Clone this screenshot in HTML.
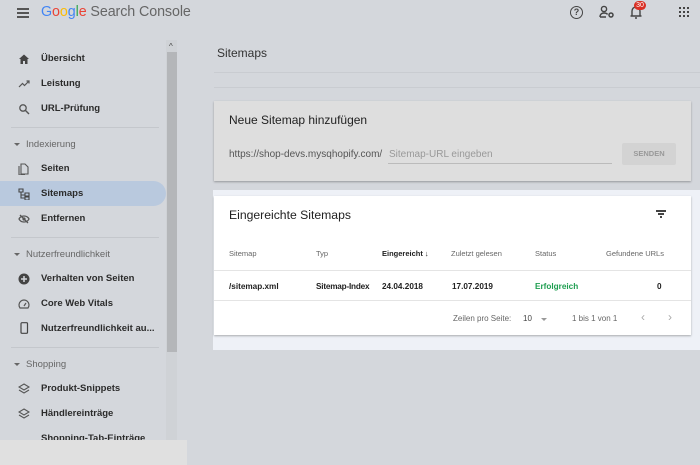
<!DOCTYPE html>
<html><head><meta charset="utf-8"><style>
*{box-sizing:border-box;margin:0;padding:0}
body{width:700px;height:465px;overflow:hidden;background:#d4d7dc;font-family:"Liberation Sans",Arial,sans-serif;position:relative;color:#222}
.abs{position:absolute}
.nav{font-size:9.5px;font-weight:bold;color:#2b2b2b;position:absolute;left:41px}
.ic{position:absolute;left:18px;width:12px;height:12px}
.sec{font-size:9.5px;color:#666;position:absolute;left:26px}
.tri{position:absolute;left:14px;width:0;height:0;border-left:3px solid transparent;border-right:3px solid transparent;border-top:3px solid #666}
.hr{position:absolute;left:11px;width:148px;height:1px;background:#c4c7cc}
.th{position:absolute;top:249px;font-size:7.5px;color:#666}
.td{position:absolute;top:282px;font-size:8.2px;font-weight:bold;color:#222}
</style></head><body>
<div class="abs" style="left:17px;top:8px;width:12px;height:2px;background:#555;box-shadow:0 4px 0 #555,0 8px 0 #555"></div>
<div class="abs" style="left:41px;top:4px;font-size:14.3px;letter-spacing:-0.1px"><span style="color:#4285f4">G</span><span style="color:#ea4335">o</span><span style="color:#fbbc05">o</span><span style="color:#4285f4">g</span><span style="color:#34a853">l</span><span style="color:#ea4335">e</span> <span style="color:#666">Search Console</span></div>
<div class="abs" style="left:570px;top:6px;width:13px;height:13px;border:1.5px solid #444;border-radius:50%;font-size:9px;font-weight:bold;text-align:center;line-height:10px;color:#444">?</div>
<svg class="abs" style="left:599px;top:5px" width="16" height="14"><circle cx="5" cy="4" r="2.6" fill="none" stroke="#444" stroke-width="1.4"/><path d="M1 12c0-3 2-4 4-4s3 .5 3.5 1.5M1 12h6" fill="none" stroke="#444" stroke-width="1.4"/><circle cx="12" cy="10" r="2" fill="none" stroke="#444" stroke-width="1.5"/></svg>
<svg class="abs" style="left:630px;top:5px" width="12" height="15"><path d="M2 11V6a4 4 0 018 0v5h1.5H.5M5 13h2" fill="none" stroke="#444" stroke-width="1.4"/></svg>
<div class="abs" style="left:634px;top:1px;width:12px;height:9px;background:#d93025;border-radius:5px;color:#fff;font-size:7px;text-align:center;line-height:9px">30</div>
<div class="abs" style="left:679px;top:7px;width:2px;height:2px;background:#444;box-shadow:4px 0 #444,8px 0 #444,0 4px #444,4px 4px #444,8px 4px #444,0 8px #444,4px 8px #444,8px 8px #444"></div>
<div class="abs" style="left:166px;top:40px;width:11px;height:400px;background:#cfd2d6"></div>
<div class="abs" style="left:167px;top:52px;width:10px;height:300px;background:#b4b6b9"></div>
<div class="abs" style="left:169px;top:42px;font-size:8px;color:#444">^</div>
<div class="abs" style="left:0;top:181px;width:166px;height:25px;background:#b9c9de;border-radius:0 13px 13px 0"></div>
<svg class="ic" style="top:53px" viewBox="0 0 12 12"><path d="M1 6L6 1.5 11 6H9.5v5H7V8H5v3H2.5V6z" fill="#444"/></svg>
<div class="nav" style="top:53px">Übersicht</div>
<svg class="ic" style="top:78px" viewBox="0 0 12 12"><path d="M1 9l3.5-3.5 2 2L11 3M8.5 3H11v2.5" fill="none" stroke="#555" stroke-width="1.2"/></svg>
<div class="nav" style="top:78px">Leistung</div>
<svg class="ic" style="top:103px" viewBox="0 0 12 12"><circle cx="5" cy="5" r="3.2" fill="none" stroke="#555" stroke-width="1.3"/><path d="M7.5 7.5L11 11" stroke="#555" stroke-width="1.4"/></svg>
<div class="nav" style="top:103px">URL-Prüfung</div>
<div class="hr" style="top:127px"></div>
<div class="tri" style="top:143px"></div><div class="sec" style="top:139px">Indexierung</div>
<svg class="ic" style="top:163px" viewBox="0 0 12 12"><path d="M3 1h4l3 3v7H3zM1 3v9h6" fill="none" stroke="#555" stroke-width="1.1"/></svg>
<div class="nav" style="top:163px">Seiten</div>
<svg class="ic" style="top:188px" viewBox="0 0 12 12"><path d="M1 1h4v3H1zM3 4v6h4M3 7h4M7 5h4v3H7zM7 9h4v3H7z" fill="none" stroke="#444" stroke-width="1.1"/></svg>
<div class="nav" style="top:188px">Sitemaps</div>
<svg class="ic" style="top:213px" viewBox="0 0 12 12"><path d="M1 6c2-4 8-4 10 0-2 4-8 4-10 0zM2 2l8 8" fill="none" stroke="#555" stroke-width="1.3"/><circle cx="6" cy="6" r="1.6" fill="#555"/></svg>
<div class="nav" style="top:213px">Entfernen</div>
<div class="hr" style="top:237px"></div>
<div class="tri" style="top:253px"></div><div class="sec" style="top:249px">Nutzerfreundlichkeit</div>
<svg class="ic" style="top:273px" viewBox="0 0 12 12"><circle cx="6" cy="6" r="5.5" fill="#444"/><path d="M3 6h6M6 3v6" stroke="#d4d7dc" stroke-width="1.5"/></svg>
<div class="nav" style="top:273px">Verhalten von Seiten</div>
<svg class="ic" style="top:298px" viewBox="0 0 12 12"><path d="M2 10a5 5 0 118 0z" fill="none" stroke="#555" stroke-width="1.2"/><path d="M6 8l2-3" stroke="#555" stroke-width="1.2"/></svg>
<div class="nav" style="top:298px">Core Web Vitals</div>
<svg class="ic" style="top:322px" viewBox="0 0 12 12"><rect x="3" y="0.7" width="6.5" height="10.6" rx="1" fill="none" stroke="#444" stroke-width="1.2"/></svg>
<div class="nav" style="top:323px">Nutzerfreundlichkeit au...</div>
<div class="hr" style="top:347px"></div>
<div class="tri" style="top:363px"></div><div class="sec" style="top:359px">Shopping</div>
<svg class="ic" style="top:383px" viewBox="0 0 12 12"><path d="M6 1l5 3-5 3-5-3zM1 7l5 3 5-3" fill="none" stroke="#555" stroke-width="1.1"/></svg>
<div class="nav" style="top:383px">Produkt-Snippets</div>
<svg class="ic" style="top:408px" viewBox="0 0 12 12"><path d="M6 1l5 3-5 3-5-3zM1 7l5 3 5-3" fill="none" stroke="#555" stroke-width="1.1"/></svg>
<div class="nav" style="top:408px">Händlereinträge</div>
<div class="nav" style="top:433px">Shopping-Tab-Einträge</div>
<div class="abs" style="left:0;top:440px;width:187px;height:25px;background:#e0e0e0"></div>
<div class="abs" style="left:217px;top:46px;font-size:12px;color:#333">Sitemaps</div>
<div class="abs" style="left:214px;top:72px;width:486px;height:1px;background:#c9ccd1"></div>
<div class="abs" style="left:214px;top:87px;width:486px;height:1px;background:#c9ccd1"></div>
<div class="abs" style="left:214px;top:101px;width:477px;height:80px;background:#dedede;box-shadow:0 1px 2px rgba(0,0,0,.3)"></div>
<div class="abs" style="left:229px;top:113px;font-size:12px;color:#222">Neue Sitemap hinzufügen</div>
<div class="abs" style="left:229px;top:149px;font-size:10px;color:#555">https://shop-devs.mysqhopify.com/</div>
<div class="abs" style="left:389px;top:149px;font-size:10px;color:#999">Sitemap-URL eingeben</div>
<div class="abs" style="left:388px;top:163px;width:224px;height:1px;background:#bbb"></div>
<div class="abs" style="left:622px;top:143px;width:54px;height:22px;background:#d3d3d3;border-radius:2px;font-size:7.5px;color:#999;text-align:center;line-height:22px;font-weight:bold">SENDEN</div>
<div class="abs" style="left:213px;top:190px;width:487px;height:160px;background:#eef1f7"></div>
<div class="abs" style="left:214px;top:196px;width:477px;height:139px;background:#fff;box-shadow:0 1px 2px rgba(0,0,0,.3)"></div>
<div class="abs" style="left:229px;top:208px;font-size:12.2px;color:#222">Eingereichte Sitemaps</div>
<div class="abs" style="left:656px;top:210px;width:10px;height:1.5px;background:#444"></div>
<div class="abs" style="left:658px;top:213px;width:6px;height:1.5px;background:#444"></div>
<div class="abs" style="left:660px;top:216px;width:2px;height:1.5px;background:#444"></div>
<div class="th" style="left:229px">Sitemap</div>
<div class="th" style="left:316px">Typ</div>
<div class="th" style="left:382px;color:#222;font-weight:bold">Eingereicht &#8595;</div>
<div class="th" style="left:451px">Zuletzt gelesen</div>
<div class="th" style="left:535px">Status</div>
<div class="th" style="left:606px">Gefundene URLs</div>
<div class="abs" style="left:214px;top:270px;width:477px;height:1px;background:#e4e4e4"></div>
<div class="td" style="left:229px">/sitemap.xml</div>
<div class="td" style="left:316px;letter-spacing:-0.2px">Sitemap-Index</div>
<div class="td" style="left:382px">24.04.2018</div>
<div class="td" style="left:452px">17.07.2019</div>
<div class="td" style="left:535px;color:#1e9e50">Erfolgreich</div>
<div class="td" style="left:657px">0</div>
<div class="abs" style="left:214px;top:300px;width:477px;height:1px;background:#e4e4e4"></div>
<div class="abs" style="left:453px;top:314px;font-size:8px;color:#666">Zeilen pro Seite:</div>
<div class="abs" style="left:523px;top:314px;font-size:8px;color:#444">10</div>
<div class="abs" style="left:541px;top:318px;border-left:3px solid transparent;border-right:3px solid transparent;border-top:3px solid #999"></div>
<div class="abs" style="left:572px;top:314px;font-size:8px;color:#666">1 bis 1 von 1</div>
<div class="abs" style="left:641px;top:310px;font-size:12px;color:#aaa">&#8249;</div>
<div class="abs" style="left:668px;top:310px;font-size:12px;color:#aaa">&#8250;</div>
</body></html>
